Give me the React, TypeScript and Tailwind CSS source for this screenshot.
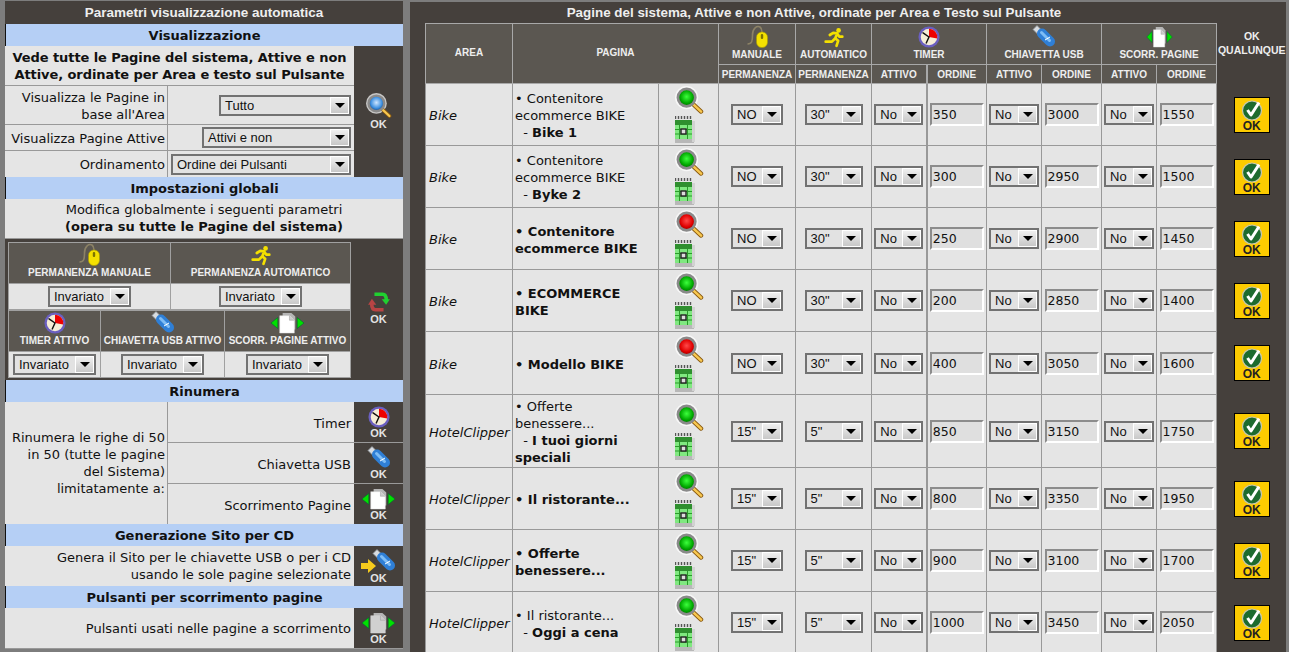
import type { ReactNode } from 'react';

const sans = "font-['DejaVu_Sans',Verdana,sans-serif]";

const Magnifier = ({ color = 'green', size = 29 }: { color?: 'green' | 'red' | 'blue'; size?: number }) => {
  const stops = {
    green: ['#3cff3c', '#00a800', '#006b00'],
    red: ['#ff4a4a', '#e00000', '#8a0000'],
    blue: ['#cfe6ff', '#3d8fe0', '#123f7a'],
  }[color];
  const id = `lens-${color}`;
  return (
    <svg width={size} height={size} viewBox="0 0 30 30" className="block">
      <defs>
        <radialGradient id={id} cx="50%" cy="45%" r="55%">
          <stop offset="0%" stopColor={stops[0]} />
          <stop offset="65%" stopColor={stops[1]} />
          <stop offset="100%" stopColor={stops[2]} />
        </radialGradient>
      </defs>
      <circle cx="12" cy="12" r="12" fill="#fff" fillOpacity="0.7" />
      <path d="M19 19 L27 26.5" stroke="#8a5a10" strokeWidth="4.4" strokeLinecap="round" />
      <path d="M19 19 L27 26.5" stroke="#f8c850" strokeWidth="2.6" strokeLinecap="round" />
      <circle cx="12" cy="12" r="9" fill={`url(#${id})`} stroke="#8a8a8a" strokeWidth="2.8" />
    </svg>
  );
};

const CalendarIcon = () => (
  <svg width="21" height="28" viewBox="0 0 21 28" className="block">
    <rect x="0" y="24" width="19" height="4" fill="#b8b8b8" />
    <rect x="17" y="6" width="3" height="21" fill="#d2d2d2" />
    <path d="M0.5 1 V4 M3.5 1 V4 M6.5 1 V4 M9.5 1 V4 M12.5 1 V4 M15.5 1 V4" stroke="#555" strokeWidth="1.4" />
    <rect x="0" y="5" width="17" height="5" fill="#2f8f2f" />
    <rect x="0" y="10" width="17" height="14" fill="#80e880" />
    <path d="M0 14.5 H17 M0 19 H17 M4.5 10 V24 M12.5 10 V24" stroke="#2a9a2a" strokeWidth="1" />
    <rect x="6" y="14" width="5" height="5" fill="#ddd" stroke="#222" strokeWidth="1.4" />
  </svg>
);

const MouseIcon = () => (
  <svg width="21" height="23" viewBox="0 0 21 23" className="block">
    <path d="M0.5 19 C5 19 5.5 16 5.5 10 C5.5 3 10 0.5 13 2 C14.5 3 15 5 15 7" fill="none" stroke="#8c8266" strokeWidth="1.6" />
    <rect x="9.5" y="7" width="11" height="15.5" rx="5.2" fill="#f4e000" stroke="#a89a00" strokeWidth="0.6" />
    <rect x="13.8" y="9" width="2.4" height="5" rx="1.1" fill="#7d7300" />
  </svg>
);

const RunnerIcon = () => (
  <svg width="20" height="21" viewBox="0 0 24 24" className="block">
    <circle cx="17.5" cy="3.5" r="2.8" fill="#f4e000" />
    <path d="M7 9 L11 6.5 L16 7 L13.5 13 L17 16 L15 22 M16 7.5 L18.5 11 L22 11 M13 13.5 L9.5 17 L2 17" fill="none" stroke="#f4e000" strokeWidth="3.2" strokeLinejoin="round" strokeLinecap="round" />
  </svg>
);

const ClockIcon = () => (
  <svg width="22" height="22" viewBox="0 0 24 24" className="block">
    <circle cx="12" cy="12" r="11.5" fill="#6a5fc0" />
    <circle cx="12" cy="12" r="9" fill="#f5edd6" />
    <path d="M12 12 L12 3 A9 9 0 0 1 21 13.5 Z" fill="#ee0000" />
    <path d="M12 12 L5.5 7.5 M12 12 L9 18.5" stroke="#111" strokeWidth="1.6" strokeLinecap="round" />
  </svg>
);

const UsbIcon = () => (
  <svg width="24" height="23" viewBox="0 0 24 23" className="block">
    <path d="M1 4.5 L5 0.5 L10.5 6 L6.5 10 Z" fill="#d8dce0" stroke="#8a8f96" strokeWidth="0.8" />
    <path d="M10 8.5 L18 16.5" stroke="#2f7fd6" strokeWidth="10" strokeLinecap="round" />
    <path d="M9.5 7.5 L17.5 15.5" stroke="#7fbdf5" strokeWidth="3" strokeLinecap="round" />
    <path d="M13 15 L18 12" stroke="#fff" strokeWidth="1" />
  </svg>
);

const PagesIcon = ({ fill = '#ffffff', width = 35 }: { fill?: string; width?: number }) => (
  <svg width={width} height="22" viewBox="0 0 36 24" preserveAspectRatio="none" className="block">
    <path d="M1 12 L8 6 V18 Z" fill="#00e000" stroke="#063" strokeWidth="0.6" />
    <path d="M35 12 L28 6 V18 Z" fill="#00e000" stroke="#063" strokeWidth="0.6" />
    <path d="M13 1 H22 L26 5 V19 H13 Z" fill="#b5b5b5" />
    <path d="M10 4 H20 L25 9 V23 H10 Z" fill={fill} stroke="#ddd" strokeWidth="0.5" />
    <path d="M20 4 V9 H25" fill="#ccc" stroke="#999" strokeWidth="0.5" />
  </svg>
);

const SyncIcon = () => (
  <svg width="24" height="20" viewBox="0 0 24 22" className="block">
    <path d="M7 2.5 H16 C19 2.5 20 5 20 9" fill="none" stroke="#20d030" strokeWidth="4" />
    <path d="M15 8 H24 L19.8 14 Z" fill="#20d030" />
    <path d="M17 19.5 H8 C5 19.5 4 17 4 13" fill="none" stroke="#b84444" strokeWidth="4" />
    <path d="M0 14 H9 L4.2 7.5 Z" fill="#b84444" />
  </svg>
);

const UsbArrowIcon = () => (
  <div className="flex items-start h-[24px]">
    <svg width="15" height="14" viewBox="0 0 15 14" className="block mt-[10px] -mr-[4px] relative z-10">
      <path d="M0 4 H7 V0 L15 7 L7 14 V10 H0 Z" fill="#f6cb1c" />
    </svg>
    <UsbIcon />
  </div>
);

const OkLabel = () => (
  <span className="block font-['Liberation_Sans',Arial,sans-serif] font-bold text-[11px] leading-[11px] text-[#e4e4e4]">OK</span>
);

const OkAction = ({ children }: { children: ReactNode }) => (
  <div className="w-[49px] shrink-0 bg-[#45403c] flex flex-col items-center justify-center">
    {children}
    <OkLabel />
  </div>
);

const Dropdown = ({ value, className }: { value: string; className: string }) => (
  <div className={`inline-flex h-[21px] border-2 border-[#727272] bg-[#e2e2e2] font-['Liberation_Sans',Arial,sans-serif] text-[13px] leading-[17px] text-[#111] text-left ${className}`}>
    <span className="flex-1 pl-[4px] whitespace-nowrap overflow-hidden">{value}</span>
    <span className="w-[19px] h-full flex items-center justify-center border border-white bg-gradient-to-b from-[#f0f0f0] to-[#c8c8c8]">
      <span className="w-0 h-0 border-x-[5px] border-x-transparent border-t-[5px] border-t-black" />
    </span>
  </div>
);

const NumberBox = ({ value }: { value: number }) => (
  <input
    readOnly
    value={value}
    className={`w-[54px] h-[23px] border-2 border-t-[#8c8c8c] border-l-[#8c8c8c] border-r-white border-b-white bg-[#dfdfdf] px-[1px] ${sans} text-[12.5px] text-[#111] outline-none`}
  />
);

const SectionBar = ({ title }: { title: string }) => (
  <div className={`h-[22px] bg-[#b5cff5] text-center ${sans} font-bold text-[13px] leading-[23px] text-[#111] border-l border-l-[#111] shrink-0`}>
    {title}
  </div>
);

const ColHead = ({ icon, label }: { icon: ReactNode; label: string }) => (
  <div className="h-[40px] bg-[#5b5751] flex flex-col items-center justify-end pb-[3px]">
    {icon}
    <span className="font-['Liberation_Sans',Arial,sans-serif] font-bold text-[10px] leading-[14px] text-[#eeeeee] whitespace-nowrap">{label}</span>
  </div>
);

const Sidebar = () => (
  <aside className={`w-[398px] ml-[5px] shrink-0 flex flex-col mt-[1px] ${sans} text-[13px] leading-[17px] text-[#111]`}>
    <div className="h-[23px] bg-[#45403c] text-center text-[#eeeeee] font-['Liberation_Sans',Arial,sans-serif] font-bold text-[13.5px] leading-[23px]">
      Parametri visualizzazione automatica
    </div>
    <SectionBar title="Visualizzazione" />
    <div className="flex h-[131px]">
      <div className="flex-1 flex flex-col bg-[#e5e5e5] divide-y divide-[#999]">
        <div className="h-[40px] flex items-center justify-center text-center font-bold tracking-[-0.08px]">
          <span>Vede tutte le Pagine del sistema, Attive e non Attive, ordinate per Area e testo sul Pulsante</span>
        </div>
        <div className="h-[39px] flex">
          <div className="w-[163px] border-r border-r-[#999] text-right pr-[2px] pt-[3px]">Visualizza le Pagine in base all'Area</div>
          <div className="flex-1 flex items-center justify-end pr-[3px]"><Dropdown value="Tutto" className="w-[132px]" /></div>
        </div>
        <div className="h-[26px] flex">
          <div className="w-[163px] border-r border-r-[#999] text-right pr-[2px] leading-[27px] whitespace-nowrap">Visualizza Pagine Attive</div>
          <div className="flex-1 flex items-center justify-end pr-[3px]"><Dropdown value="Attivi e non" className="w-[149px]" /></div>
        </div>
        <div className="h-[26px] flex">
          <div className="w-[163px] border-r border-r-[#999] text-right pr-[2px] leading-[27px]">Ordinamento</div>
          <div className="flex-1 flex items-center justify-end pr-[3px]"><Dropdown value="Ordine dei Pulsanti" className="w-[180px]" /></div>
        </div>
      </div>
      <OkAction><Magnifier color="blue" size={26} /></OkAction>
    </div>
    <SectionBar title="Impostazioni globali" />
    <div className="h-[39px] bg-[#e5e5e5] text-center pt-[2px]">
      Modifica globalmente i seguenti parametri
      <br />
      <b>(opera su tutte le Pagine del sistema)</b>
    </div>
    <div className="flex h-[142px] bg-[#45403c] border-t border-t-[#999]">
      <div className="w-[349px] shrink-0 p-[3px]">
        <div className="bg-[#a0a0a0] p-[1px] flex flex-col gap-[2px] h-[136px]">
          <div className="grid grid-cols-[161px_1fr] gap-[1px]">
            <ColHead icon={<MouseIcon />} label="PERMANENZA MANUALE" />
            <ColHead icon={<RunnerIcon />} label="PERMANENZA AUTOMATICO" />
            <div className="h-[25px] bg-[#e5e5e5] flex items-center justify-center"><Dropdown value="Invariato" className="w-[83px]" /></div>
            <div className="h-[25px] bg-[#e5e5e5] flex items-center justify-center"><Dropdown value="Invariato" className="w-[83px]" /></div>
          </div>
          <div className="grid grid-cols-[91px_123px_1fr] gap-[1px]">
            <ColHead icon={<ClockIcon />} label="TIMER ATTIVO" />
            <ColHead icon={<UsbIcon />} label="CHIAVETTA USB ATTIVO" />
            <ColHead icon={<PagesIcon />} label="SCORR. PAGINE ATTIVO" />
            <div className="h-[25px] bg-[#e5e5e5] flex items-center justify-center"><Dropdown value="Invariato" className="w-[83px]" /></div>
            <div className="h-[25px] bg-[#e5e5e5] flex items-center justify-center"><Dropdown value="Invariato" className="w-[83px]" /></div>
            <div className="h-[25px] bg-[#e5e5e5] flex items-center justify-center"><Dropdown value="Invariato" className="w-[83px]" /></div>
          </div>
        </div>
      </div>
      <div className="flex-1 flex flex-col items-center justify-center gap-[2px] pb-[2px]">
        <SyncIcon />
        <OkLabel />
      </div>
    </div>
    <SectionBar title="Rinumera" />
    <div className="flex h-[122px]">
      <div className="w-[163px] shrink-0 bg-[#e5e5e5] border-r border-r-[#999] flex items-center justify-end text-right pr-[2px]">
        <span>Rinumera le righe di 50 in 50 (tutte le pagine del Sistema) limitatamente a:</span>
      </div>
      <div className="flex-1 flex flex-col">
        {[
          { label: 'Timer', icon: <ClockIcon /> },
          { label: 'Chiavetta USB', icon: <UsbIcon /> },
          { label: 'Scorrimento Pagine', icon: <PagesIcon /> },
        ].map((row, i) => (
          <div key={row.label} className={`flex-1 flex ${i > 0 ? 'border-t border-t-[#999]' : ''}`}>
            <div className="flex-1 bg-[#e5e5e5] flex items-center justify-end pr-[3px] pt-[2px]">{row.label}</div>
            <OkAction>{row.icon}</OkAction>
          </div>
        ))}
      </div>
    </div>
    <SectionBar title="Generazione Sito per CD" />
    <div className="flex h-[40px]">
      <div className="flex-1 bg-[#e5e5e5] text-right pr-[3px] pt-[3px]">
        Genera il Sito per le chiavette USB o per i CD
        <br />
        usando le sole pagine selezionate
      </div>
      <OkAction><UsbArrowIcon /></OkAction>
    </div>
    <SectionBar title="Pulsanti per scorrimento pagine" />
    <div className="flex h-[41px] border-b border-b-[#999]">
      <div className="flex-1 bg-[#e5e5e5] flex items-center justify-end pr-[3px]">Pulsanti usati nelle pagine a scorrimento</div>
      <OkAction><PagesIcon fill="#d0d0d0" /></OkAction>
    </div>
  </aside>
);

const rows = [
  { area: 'Bike', parent: 'Contenitore ecommerce BIKE', child: 'Bike 1', lens: 'green', man: 'NO', auto: '30"', timer: 350, usb: 3000, scorr: 1550, h: 'h-[62px]' },
  { area: 'Bike', parent: 'Contenitore ecommerce BIKE', child: 'Byke 2', lens: 'green', man: 'NO', auto: '30"', timer: 300, usb: 2950, scorr: 1500, h: 'h-[62px]' },
  { area: 'Bike', parent: 'Contenitore ecommerce BIKE', lens: 'red', man: 'NO', auto: '30"', timer: 250, usb: 2900, scorr: 1450, h: 'h-[62px]' },
  { area: 'Bike', parent: 'ECOMMERCE BIKE', lens: 'green', man: 'NO', auto: '30"', timer: 200, usb: 2850, scorr: 1400, h: 'h-[62px]' },
  { area: 'Bike', parent: 'Modello BIKE', lens: 'red', man: 'NO', auto: '30"', timer: 400, usb: 3050, scorr: 1600, h: 'h-[63px]' },
  { area: 'HotelClipper', parent: 'Offerte benessere...', child: 'I tuoi giorni speciali', lens: 'green', man: '15"', auto: '5"', timer: 850, usb: 3150, scorr: 1750, h: 'h-[73px]' },
  { area: 'HotelClipper', parent: 'Il ristorante...', lens: 'green', man: '15"', auto: '5"', timer: 800, usb: 3350, scorr: 1950, h: 'h-[62px]' },
  { area: 'HotelClipper', parent: 'Offerte benessere...', lens: 'green', man: '15"', auto: '5"', timer: 900, usb: 3100, scorr: 1700, h: 'h-[62px]' },
  { area: 'HotelClipper', parent: 'Il ristorante...', child: 'Oggi a cena', lens: 'green', man: '15"', auto: '5"', timer: 1000, usb: 3450, scorr: 2050, h: 'h-[62px]' },
] as const;

const thCls = "border border-[#a8a8a8] bg-[#5b5751] font-['Liberation_Sans',Arial,sans-serif] font-bold text-[10px] leading-[13px] text-[#eeeeee] p-0 whitespace-nowrap";
const tdCls = 'border border-[#999] bg-[#e5e5e5] p-0 align-middle';

const HeadIcon = ({ icon, label }: { icon: ReactNode; label: string }) => (
  <div className="flex flex-col items-center justify-end h-[40px] pb-[3px]">
    {icon}
    <span className="leading-[13px]">{label}</span>
  </div>
);

const OkButton = () => (
  <div className="w-[36px] h-[36px] mx-auto border border-black bg-[#fccb00] flex flex-col items-center">
    <svg width="24" height="22" viewBox="0 0 24 22" className="block mt-[1px]">
      <circle cx="12" cy="11.5" r="9.5" fill="#1d6b2e" stroke="#c8c8b0" strokeWidth="1.2" />
      <path d="M7.5 11 L11 16 L19 3.5" fill="none" stroke="#fff" strokeWidth="3" strokeLinejoin="round" />
    </svg>
    <span className="font-['Liberation_Sans',Arial,sans-serif] font-bold text-[12px] leading-[11px] text-[#222]">OK</span>
  </div>
);

const PagesTable = () => (
  <main className={`flex-1 min-w-0 mt-[2px] mr-[3px] bg-[#45403c] pl-[15px] flex flex-col ${sans} text-[13px] leading-[17px] text-[#111]`}>
    <div className="h-[21px] text-center text-[#eeeeee] font-['Liberation_Sans',Arial,sans-serif] font-bold text-[13.4px] leading-[21px] pr-[83px] whitespace-nowrap">
      Pagine del sistema, Attive e non Attive, ordinate per Area e Testo sul Pulsante
    </div>
    <table className="table-fixed border-collapse w-[861px]">
      <colgroup>
        <col className="w-[87px]" />
        <col className="w-[146px]" />
        <col className="w-[60px]" />
        <col className="w-[77px]" />
        <col className="w-[76px]" />
        <col className="w-[55px]" />
        <col className="w-[60px]" />
        <col className="w-[55px]" />
        <col className="w-[60px]" />
        <col className="w-[55px]" />
        <col className="w-[60px]" />
        <col className="w-[70px]" />
      </colgroup>
      <thead>
        <tr className="h-[41px]">
          <th rowSpan={2} className={`${thCls} pb-[2px]`}>AREA</th>
          <th rowSpan={2} colSpan={2} className={`${thCls} pb-[2px]`}>PAGINA</th>
          <th className={thCls}><HeadIcon icon={<MouseIcon />} label="MANUALE" /></th>
          <th className={thCls}><HeadIcon icon={<RunnerIcon />} label="AUTOMATICO" /></th>
          <th colSpan={2} className={thCls}><HeadIcon icon={<ClockIcon />} label="TIMER" /></th>
          <th colSpan={2} className={thCls}><HeadIcon icon={<UsbIcon />} label="CHIAVETTA USB" /></th>
          <th colSpan={2} className={thCls}><HeadIcon icon={<PagesIcon width={27} />} label="SCORR. PAGINE" /></th>
          <th rowSpan={2} className="font-['Liberation_Sans',Arial,sans-serif] font-bold text-[10.5px] leading-[14px] text-[#eeeeee] p-0 align-top pt-[5px]">OK<br />QUALUNQUE</th>
        </tr>
        <tr className="h-[19px]">
          <th className={thCls}>PERMANENZA</th>
          <th className={thCls}>PERMANENZA</th>
          <th className={thCls}>ATTIVO</th>
          <th className={`${thCls} border-l-2`}>ORDINE</th>
          <th className={thCls}>ATTIVO</th>
          <th className={thCls}>ORDINE</th>
          <th className={thCls}>ATTIVO</th>
          <th className={thCls}>ORDINE</th>
        </tr>
      </thead>
      <tbody>
        {rows.map((row, i) => {
          const hasChild = 'child' in row;
          return (
            <tr key={i} className={row.h}>
              <td className={`${tdCls} italic pl-[3px] pt-[2px] whitespace-nowrap`}>{row.area}</td>
              <td className={`${tdCls} px-[2px] pt-[2px]`}>
                {hasChild ? (
                  <>
                    {'\u2022'} {row.parent}
                    <br />
                    &nbsp;&nbsp;- <b>{row.child}</b>
                  </>
                ) : (
                  <b>{'\u2022'} {row.parent}</b>
                )}
              </td>
              <td className={tdCls}>
                <div className="flex flex-col items-start pl-[16px]">
                  <Magnifier color={row.lens} />
                  <CalendarIcon />
                </div>
              </td>
              <td className={`${tdCls} text-center`}><Dropdown value={row.man} className="w-[52px]" /></td>
              <td className={`${tdCls} text-center`}><Dropdown value={row.auto} className="w-[58px]" /></td>
              <td className={`${tdCls} text-center`}><Dropdown value="No" className="w-[49px]" /></td>
              <td className={`${tdCls} text-center border-l-2`}><NumberBox value={row.timer} /></td>
              <td className={`${tdCls} text-center`}><Dropdown value="No" className="w-[50px]" /></td>
              <td className={`${tdCls} text-center`}><NumberBox value={row.usb} /></td>
              <td className={`${tdCls} text-center`}><Dropdown value="No" className="w-[50px]" /></td>
              <td className={`${tdCls} text-center`}><NumberBox value={row.scorr} /></td>
              <td className="align-middle p-0"><OkButton /></td>
            </tr>
          );
        })}
      </tbody>
    </table>
  </main>
);

export default function App() {
  return (
    <div className="flex h-[652px] w-full overflow-hidden bg-[#7d7d7d] gap-[7px]">
      <Sidebar />
      <PagesTable />
    </div>
  );
}
